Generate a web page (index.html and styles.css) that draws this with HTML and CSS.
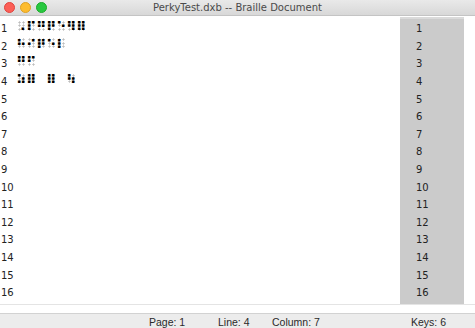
FILE: index.html
```html
<!DOCTYPE html>
<html>
<head>
<meta charset="utf-8">
<link rel="stylesheet" href="styles.css">
</head>
<body>
<div class="window">
  <div class="titlebar">
    <div class="lights">
      <span class="light red"></span>
      <span class="light yellow"></span>
      <span class="light green"></span>
    </div>
    <div class="title">PerkyTest.dxb -- Braille Document</div>
    <div></div>
  </div>
  <div class="content">
    <div class="editor">
      <div class="row"><span class="num">1</span><span class="brl"><span class="c">⠠</span><span class="c">⠏</span><span class="c">⠛</span><span class="c">⠟</span><span class="c">⠑</span><span class="c">⠻</span><span class="c">⠿</span></span></div>
      <div class="row"><span class="num">2</span><span class="brl"><span class="c">⠓</span><span class="c">⠊</span><span class="c">⠟</span><span class="c">⠑</span><span class="c">⠇</span></span></div>
      <div class="row"><span class="num">3</span><span class="brl"><span class="c">⠛</span><span class="c">⠋</span></span></div>
      <div class="row"><span class="num">4</span><span class="brl"><span class="c">⠵</span><span class="c">⠿</span><span class="c blank"> </span><span class="c">⠿</span><span class="c blank"> </span><span class="c">⠳</span></span></div>
      <div class="row"><span class="num">5</span></div>
      <div class="row"><span class="num">6</span></div>
      <div class="row"><span class="num">7</span></div>
      <div class="row"><span class="num">8</span></div>
      <div class="row"><span class="num">9</span></div>
      <div class="row"><span class="num">10</span></div>
      <div class="row"><span class="num">11</span></div>
      <div class="row"><span class="num">12</span></div>
      <div class="row"><span class="num">13</span></div>
      <div class="row"><span class="num">14</span></div>
      <div class="row"><span class="num">15</span></div>
      <div class="row"><span class="num">16</span></div>
    </div>
    <div class="side">
      <div class="srow">1</div><div class="srow">2</div><div class="srow">3</div><div class="srow">4</div>
      <div class="srow">5</div><div class="srow">6</div><div class="srow">7</div><div class="srow">8</div>
      <div class="srow">9</div><div class="srow">10</div><div class="srow">11</div><div class="srow">12</div>
      <div class="srow">13</div><div class="srow">14</div><div class="srow">15</div><div class="srow">16</div>
    </div>
    <div class="edge"></div>
  </div>
  <div class="sep"></div>
  <div class="status">
    <span class="st page">Page: 1</span>
    <span class="st line">Line: 4</span>
    <span class="st col">Column: 7</span>
    <span class="st keys">Keys: 6</span>
  </div>
</div>
</body>
</html>
```
FILE: styles.css
```css
* { box-sizing: border-box; }
html, body { margin: 0; padding: 0; }
body {
  width: 475px;
  height: 328px;
  overflow: hidden;
  background: #ffffff;
  font-family: "DejaVu Sans", "Liberation Sans", sans-serif;
  color: #222;
}
.window { display: flex; flex-direction: column; height: 328px; }
.titlebar {
  height: 16px;
  display: grid;
  grid-template-columns: 1fr auto 1fr;
  align-items: center;
  background: linear-gradient(#e9e9e9, #d8d8d8);
  border-bottom: 1px solid #c4c4c4;
}
.lights { display: flex; gap: 5px; padding-left: 4px; margin-top: -1px; }
.light { width: 11px; height: 11px; border-radius: 50%; display: block; }
.red { background: #fc5f57; border: 0.5px solid #e0443e; }
.yellow { background: #fdbc2e; border: 0.5px solid #dea123; }
.green { background: #28c840; border: 0.5px solid #1aab29; }
.title {
  font-family: "DejaVu Sans", sans-serif;
  font-size: 10px;
  color: #4a4a4a;
  white-space: nowrap;
  line-height: 15px;
}
.content { display: flex; height: 288px; }
.editor { flex: 1; padding-top: 4px; }
.row { height: 17.6px; display: flex; align-items: center; }
.num { width: 16px; padding-left: 1px; font-size: 10px; color: #222; }
.brl {
  display: flex;
  margin-top: -3px;
  font-family: "DejaVu Sans", sans-serif;
  font-weight: bold;
  font-size: 13px;
  line-height: 14px;
  color: #000;
}
.c {
  display: block;
  width: 10px;
  height: 14px;
  overflow: hidden;
  background-image:
    radial-gradient(circle, #bdbdbd 0.9px, transparent 1.2px),
    radial-gradient(circle, #bdbdbd 0.9px, transparent 1.2px),
    radial-gradient(circle, #bdbdbd 0.9px, transparent 1.2px),
    radial-gradient(circle, #bdbdbd 0.9px, transparent 1.2px),
    radial-gradient(circle, #bdbdbd 0.9px, transparent 1.2px),
    radial-gradient(circle, #bdbdbd 0.9px, transparent 1.2px);
  background-size: 3px 3px;
  background-repeat: no-repeat;
  background-position: 1.5px 0.5px, 5.5px 0.5px, 1.5px 3.9px, 5.5px 3.9px, 1.5px 7.3px, 5.5px 7.3px;
}
.c.blank { background: none; }
.side {
  width: 64px;
  margin-top: 1px;
  margin-bottom: -1px;
  background: #cbcbcb;
  border-top: 2px solid #dadada;
  padding-top: 1px;
}
.srow { height: 17.6px; display: flex; align-items: center; padding-left: 16px; font-size: 10px; color: #222; }
.edge { width: 11px; }
.sep { height: 1px; background: #e4e4e4; margin-top: 0; }
.status {
  margin-top: 8px;
  flex: 1;
  background: #ececec;
  border-top: 1px solid #d2d2d2;
  font-family: "Liberation Sans", sans-serif;
  font-size: 10.5px;
  color: #2a2a2a;
  display: flex;
  align-items: center;
  padding-top: 2px;
  padding-left: 149px;
}
.st { white-space: nowrap; }
.page { width: 69px; }
.line { width: 54px; }
.col { width: 139px; }
```
